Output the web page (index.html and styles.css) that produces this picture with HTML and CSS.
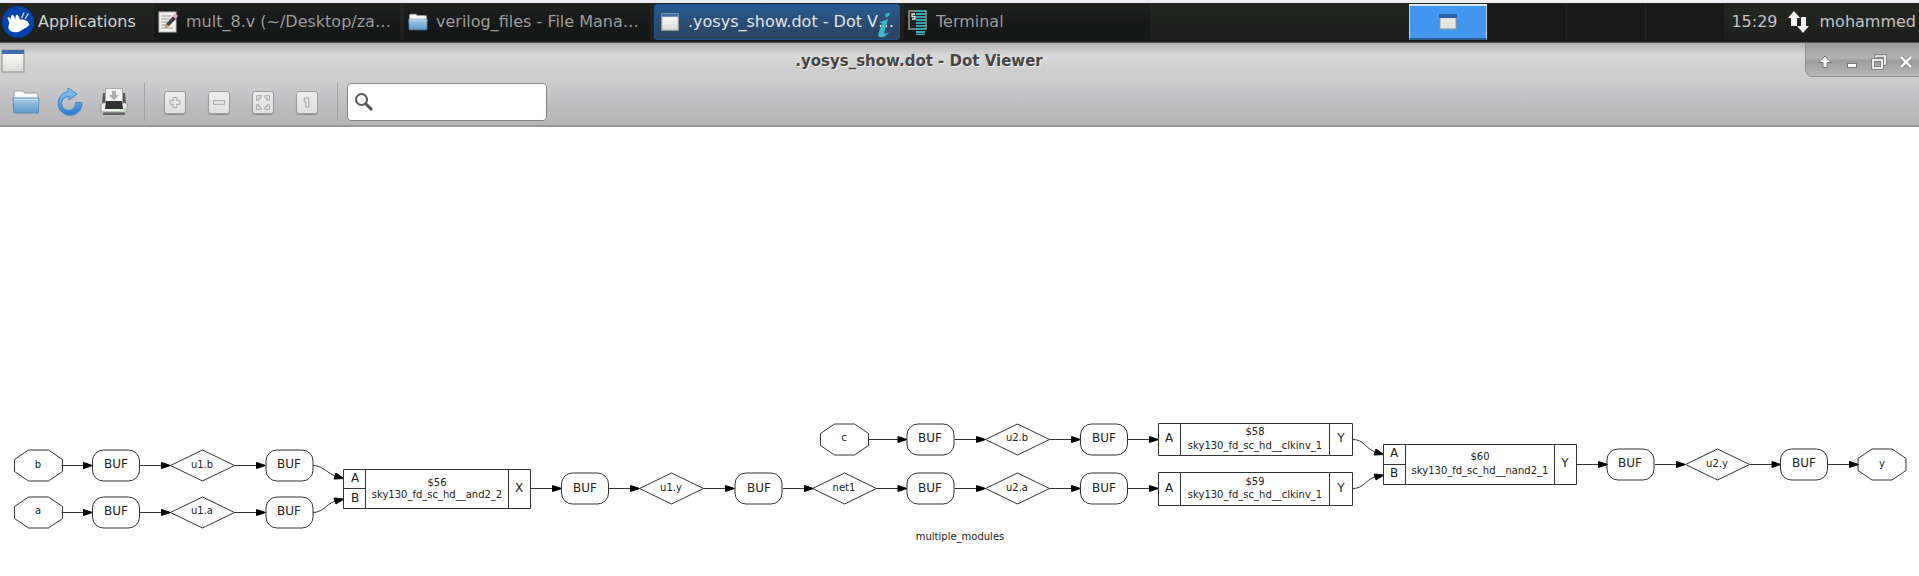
FILE: index.html
```html
<!DOCTYPE html>
<html lang="en">
<head>
<meta charset="utf-8">
<title>.yosys_show.dot - Dot Viewer</title>
<link rel="stylesheet" href="styles.css">
</head>
<body>
<svg class="defs" width="0" height="0" aria-hidden="true">
  <defs>
    <linearGradient id="blue" x1="0" y1="0" x2="0" y2="1"><stop offset="0" stop-color="#a9cbe4"/><stop offset="1" stop-color="#5a9acb"/></linearGradient>
    <linearGradient id="swirl" x1="0" y1="0" x2="0" y2="1"><stop offset="0" stop-color="#8ccbf2"/><stop offset="1" stop-color="#2878d4"/></linearGradient>
    <linearGradient id="paper" x1="0" y1="0" x2="0" y2="1"><stop offset="0" stop-color="#ffffff"/><stop offset="1" stop-color="#dcdcd6"/></linearGradient>
    <symbol id="folder" viewBox="0 0 28 26">
      <path d="M2 11V3.500Q2 2 3.500 2H11Q12.500 2 12.500 4H25Q26 4 26 5.500V11Z" fill="#fafafa" stroke="#999" stroke-width="1"/>
      <path d="M1 9H27L26.300 24H1.700Z" fill="url(#blue)" stroke="#5b8db5" stroke-width="1"/>
      <path d="M2 10.300H26" stroke="#d2e5f3"/>
    </symbol>
    <symbol id="window" viewBox="0 0 24 24">
      <rect x="1" y="1" width="22" height="22" fill="url(#paper)" stroke="#a3a39e" stroke-width="1.500"/>
      <rect x="1" y="1" width="22" height="4" fill="#3f6cad"/>
    </symbol>
    <g id="oct"><path d="M-24 -6L-10 -15.500H10L24 -6V6L10 15.500H-10L-24 6Z"/></g>
    <g id="buf"><rect x="-23.500" y="-15.500" width="47" height="31" rx="11"/></g>
    <g id="dia"><path d="M-32 0L0 -15.500L32 0L0 15.500Z"/></g>
    <g id="edge"><path d="M0 0H23"/><path class="head" d="M22 -3L31 0L22 3Z"/></g>
  </defs>
</svg>

<header class="panel">
  <button class="apps" type="button">
    <svg width="34" height="34" viewBox="0 0 34 34" aria-hidden="true">
      <circle cx="17" cy="17" r="16" fill="#0044ab"/>
      <path d="M6.500 13C7 11 9 12 10.500 15.500C9 11 11 8.500 12.500 10.500L14.500 14.500C14 10 16 8.500 17.500 11L19 14.500C23 14 27.500 16 28.500 19.500C26.500 22.500 23 23.500 19.500 26C15 28.500 8.500 27.500 7.500 23C7 20.500 9 19 8 17Z" fill="#fff"/>
      <path d="M20.500 13L23 7.500M24 14L27.500 8.500" stroke="#dce8fa" stroke-width="1.300"/>
    </svg>
    Applications
  </button>
  <nav class="tasks">
    <button class="task" type="button">
      <svg width="20" height="22" viewBox="0 0 20 22" aria-hidden="true"><rect x="1" y="1" width="17" height="20" fill="#f0f0ec" stroke="#bbb"/><path d="M3 5H13M3 8H12M3 11H10M3 14H8M3 17H15" stroke="#999"/><path d="M7 17L8 13L16 4L19 7L11 15Z" fill="#404040"/><path d="M14.500 5L17 2L20 5L17.500 8Z" fill="#e7a3d2"/><path d="M7 17L8 13L11 15Z" fill="#e0a84a"/></svg>
      <span>mult_8.v (~/Desktop/za…</span>
    </button>
    <button class="task" type="button">
      <svg width="20" height="20" aria-hidden="true"><use href="#folder"/></svg>
      <span>verilog_files - File Mana…</span>
    </button>
    <button class="task active" type="button">
      <svg width="18" height="18" aria-hidden="true"><use href="#window"/></svg>
      <span>.yosys_show.dot - Dot V…</span>
      <svg class="info" width="14" height="28" viewBox="0 0 14 32" preserveAspectRatio="none" aria-hidden="true"><path d="M9 3Q13 1 13 3.500Q12 7 9 7Q7 5 9 3Z" fill="#3fb6cb"/><path d="M2 13Q7 11 11 9L7 25Q8 27 12 24Q8 31 3 30Q0 29 2 24L5 14Z" fill="#3fb6cb"/></svg>
    </button>
    <button class="task" type="button">
      <svg width="20" height="26" viewBox="0 0 20 26" aria-hidden="true"><rect x="1" y="2" width="17" height="18" fill="#222" stroke="#9a9a9a" stroke-width="1.500"/><path d="M7 5H4V7.500H7V10H4M8 11H10" stroke="#eee" fill="none" stroke-width="1.300"/><path d="M8 2H17M8 5H17M8 8H17M8 11H17M8 14H17M8 17H17M8 20H17M8 23H17M8 25.500H17" stroke="#38a3ab" stroke-width="2"/></svg>
      <span>Terminal</span>
    </button>
  </nav>
  <div class="pager">
    <button class="desk current" type="button" aria-label="Workspace 1"><svg width="18" height="16" viewBox="0 0 18 16" aria-hidden="true"><rect x="1" y="1" width="16" height="14" fill="#e6e6e1" stroke="#9a9a92"/><path d="M0 0H18V4H0Z" fill="#2c5fa4"/></svg></button>
    <button class="desk" type="button" aria-label="Workspace 2"></button>
    <button class="desk" type="button" aria-label="Workspace 3"></button>
    <button class="desk" type="button" aria-label="Workspace 4"></button>
  </div>
  <time class="clock">15:29</time>
  <svg class="net" width="24" height="24" viewBox="0 0 24 24" aria-hidden="true"><path d="M1 8L7 1L13 8H10V16H4V8ZM10 16L16 23L22 16H19V7H14V16Z" fill="#f4f4f4"/></svg>
  <span class="user">mohammed</span>
</header>

<div class="chrome">
  <div class="titlebar">
    <svg width="24" height="24" aria-hidden="true"><use href="#window"/></svg>
    <h1>.yosys_show.dot - Dot Viewer</h1>
    <div class="controls">
      <button type="button" aria-label="Shade"><svg width="16" height="16" viewBox="0 0 16 16"><path d="M8 2L14 8.500H10V13.500H6V8.500H2Z" fill="#fff" stroke="#777"/></svg></button>
      <button type="button" aria-label="Minimize"><svg width="16" height="16" viewBox="0 0 16 16"><rect x="3.500" y="9.500" width="9" height="4" fill="#fff" stroke="#777"/></svg></button>
      <button type="button" aria-label="Restore"><svg width="16" height="16" viewBox="0 0 16 16" fill="none"><path d="M5 4V2H14V10H12" stroke="#777" stroke-width="3.500"/><path d="M5 3.500V2H14V10H12" stroke="#fff" stroke-width="1.700"/><rect x="2" y="6" width="9" height="8" stroke="#777" stroke-width="3.500"/><rect x="2" y="6" width="9" height="8" stroke="#fff" stroke-width="1.700"/></svg></button>
      <button type="button" aria-label="Close"><svg width="16" height="16" viewBox="0 0 16 16"><path d="M3 3L13 13M13 3L3 13" stroke="#777" stroke-width="4.500"/><path d="M3 3L13 13M13 3L3 13" stroke="#fff" stroke-width="2.600"/></svg></button>
    </div>
  </div>
  <div class="toolbar">
    <button class="tool" type="button" aria-label="Open"><svg width="28" height="26"><use href="#folder"/></svg></button>
    <button class="tool" type="button" aria-label="Reload"><svg width="28" height="30" viewBox="0 0 28 30"><path d="M26 15.500A12 12 0 1 1 12 4.500V1L21 7L13 13V9.500A7 7 0 1 0 19.500 15.500Z" fill="url(#swirl)" stroke="#3b87cc"/></svg></button>
    <button class="tool" type="button" aria-label="Print"><svg width="28" height="30" viewBox="0 0 28 30"><path d="M2 17L3 6H25L26 17Z" fill="#555"/><rect x="5.500" y="1.500" width="17" height="14" fill="#f2f2f2" stroke="#aaa"/><path d="M12 4H16V8H19L14 13L9 8H12Z" fill="#aaa"/><rect x="1" y="16" width="26" height="9" rx="2" fill="#f0f0f0" stroke="#999"/><path d="M6 14H22L23 22H5Z" fill="#333"/><circle cx="24.500" cy="22.500" r="1.200" fill="#7be04a"/><path d="M3 25.500H25V28H3Z" fill="#666"/></svg></button>
    <span class="sep"></span>
    <button class="tool" type="button" aria-label="Zoom in"><svg class="key" viewBox="0 0 22 23"><path d="M9 6H13V9.500H16.500V13.500H13V17H9V13.500H5.500V9.500H9Z"/></svg></button>
    <button class="tool" type="button" aria-label="Zoom out"><svg class="key" viewBox="0 0 22 23"><path d="M5 9.500H17V13.500H5Z"/></svg></button>
    <button class="tool" type="button" aria-label="Zoom to fit"><svg class="key" viewBox="0 0 22 23"><path d="M4 4H9V6.500H6.500V9H4ZM18 4H13V6.500H15.500V9H18ZM4 19H9V16.500H6.500V14H4ZM18 19H13V16.500H15.500V14H18Z"/></svg></button>
    <button class="tool" type="button" aria-label="Zoom 100%"><svg class="key" viewBox="0 0 22 23"><path d="M8 6.500H13V16.500H10V11H8Z"/></svg></button>
    <span class="sep"></span>
    <label class="search">
      <svg width="20" height="20" viewBox="0 0 20 20" aria-hidden="true"><circle cx="7.500" cy="7.500" r="5.500" fill="#f5f5f5" stroke="#555" stroke-width="2"/><path d="M11.500 11.500L18 18" stroke="#555" stroke-width="3"/></svg>
      <input type="text" aria-label="Find">
    </label>
  </div>
</div>

<main>
<svg class="graph" viewBox="0 126 1919 445" role="img" aria-label="multiple_modules netlist">
  <g class="shape">
    <use href="#oct" x="38.500" y="464.500"/><use href="#edge" x="61.500" y="464.500"/><use href="#buf" x="116" y="464.500"/><use href="#edge" x="139.500" y="464.500"/><use href="#dia" x="202.500" y="464.500"/><use href="#edge" x="234.500" y="464.500"/><use href="#buf" x="289.500" y="464.500"/>
    <use href="#oct" x="38.500" y="511.500"/><use href="#edge" x="61.500" y="511.500"/><use href="#buf" x="116" y="511.500"/><use href="#edge" x="139.500" y="511.500"/><use href="#dia" x="202.500" y="511.500"/><use href="#edge" x="234.500" y="511.500"/><use href="#buf" x="289.500" y="511.500"/>
    <path d="M313 464.500C322 464.500 326 471 335 475"/><path class="head" d="M336 472L344 477.500L334 478Z"/>
    <path d="M313 511.500C322 511.500 326 504 335 500"/><path class="head" d="M334 497L344 498L336 503Z"/>
    <path d="M343.500 468.500H530.500V507.500H343.500ZM365.500 468.500V507.500M508.500 468.500V507.500M343.500 487.500H365.500"/>
    <use href="#edge" x="530.500" y="487.500"/><use href="#buf" x="585" y="487.500"/><use href="#edge" x="608.500" y="487.500"/><use href="#dia" x="671.500" y="487.500"/><use href="#edge" x="703.500" y="487.500"/><use href="#buf" x="758.500" y="487.500"/><use href="#edge" x="782.500" y="487.500"/><use href="#dia" x="844.500" y="487.500"/><use href="#edge" x="876" y="487.500"/><use href="#buf" x="930.500" y="487.500"/><use href="#edge" x="954.500" y="487.500"/><use href="#dia" x="1017.500" y="487.500"/><use href="#edge" x="1049.500" y="487.500"/><use href="#buf" x="1104" y="487.500"/><use href="#edge" x="1127.500" y="487.500"/>
    <use href="#oct" x="844.500" y="438.500"/><path d="M868.500 438.500H880"/><use href="#edge" x="876" y="438.500"/><use href="#buf" x="930.500" y="438.500"/><use href="#edge" x="954.500" y="438.500"/><use href="#dia" x="1017.500" y="438.500"/><use href="#edge" x="1049.500" y="438.500"/><use href="#buf" x="1104" y="438.500"/><use href="#edge" x="1127.500" y="438.500"/>
    <path d="M1158.500 422.500H1352.500V454.500H1158.500ZM1180.500 422.500V454.500M1329.500 422.500V454.500"/>
    <path d="M1158.500 471.500H1352.500V504.500H1158.500ZM1180.500 471.500V504.500M1329.500 471.500V504.500"/>
    <path d="M1352.500 438.500C1364 438.500 1365 447 1375 451"/><path class="head" d="M1376 448L1384 453.500L1374 454Z"/>
    <path d="M1352.500 487.500C1364 487.500 1365 479 1375 476"/><path class="head" d="M1374 473L1384 474L1376 479Z"/>
    <path d="M1383.500 443.500H1576.500V483.500H1383.500ZM1405.500 443.500V483.500M1554.500 443.500V483.500M1383.500 463.500H1405.500"/>
    <use href="#edge" x="1576.500" y="463.500"/><use href="#buf" x="1630.500" y="463.500"/><use href="#edge" x="1654.500" y="463.500"/><use href="#dia" x="1717.500" y="463.500"/><use href="#edge" x="1750" y="463.500"/><use href="#buf" x="1804" y="463.500"/><use href="#edge" x="1827.500" y="463.500"/><use href="#oct" x="1882" y="463.500"/>
  </g>
  <g class="cell">
    <text x="116" y="467">BUF</text><text x="289" y="467">BUF</text><text x="116" y="514">BUF</text><text x="289" y="514">BUF</text>
    <text x="355" y="481">A</text><text x="355" y="501">B</text><text x="519" y="491">X</text>
    <text x="585" y="491">BUF</text><text x="759" y="491">BUF</text><text x="930" y="491">BUF</text><text x="1104" y="491">BUF</text>
    <text x="930" y="441">BUF</text><text x="1104" y="441">BUF</text>
    <text x="1169" y="441">A</text><text x="1341" y="441">Y</text><text x="1169" y="491">A</text><text x="1341" y="491">Y</text>
    <text x="1394" y="456">A</text><text x="1394" y="476">B</text><text x="1565" y="466">Y</text>
    <text x="1630" y="466">BUF</text><text x="1804" y="466">BUF</text>
  </g>
  <g class="name">
    <text x="38" y="467">b</text><text x="202" y="467">u1.b</text><text x="38" y="513">a</text><text x="202" y="513">u1.a</text>
    <text x="437" y="485">$56</text><text x="437" y="497">sky130_fd_sc_hd__and2_2</text>
    <text x="671" y="490">u1.y</text><text x="844" y="490">net1</text><text x="1017" y="490">u2.a</text>
    <text x="844" y="440">c</text><text x="1017" y="440">u2.b</text>
    <text x="1255" y="434">$58</text><text x="1255" y="448">sky130_fd_sc_hd__clkinv_1</text>
    <text x="1255" y="484">$59</text><text x="1255" y="497">sky130_fd_sc_hd__clkinv_1</text>
    <text x="1480" y="459">$60</text><text x="1480" y="473">sky130_fd_sc_hd__nand2_1</text>
    <text x="1717" y="466">u2.y</text><text x="1882" y="466">y</text>
    <text x="960" y="539">multiple_modules</text>
  </g>
</svg>
</main>
</body>
</html>
```
FILE: styles.css
```css
* { box-sizing: border-box; }
body { margin: 0; background: #fff; font-family: "DejaVu Sans", sans-serif; }
button { border: 0; padding: 0; margin: 0; background: none; font: inherit; color: inherit; }
svg { flex: none; }
.defs { position: absolute; }

.panel {
  display: flex;
  align-items: center;
  height: 43px;
  padding: 0 3px 2px 0;
  border-top: 3px solid #eeeef2;
  border-bottom: 1px solid #555;
  background: linear-gradient(#242622, #202220 60%, #1c1d1c);
  color: #c4c4c4;
  font-size: 16px;
  white-space: nowrap;
}
.apps { display: flex; align-items: center; gap: 3px; width: 154px; padding-left: 1px; color: #d2d2d2; }
.tasks { display: flex; gap: 4px; }
.task {
  position: relative;
  display: flex;
  align-items: center;
  gap: 8px;
  width: 246px;
  height: 36px;
  padding: 0 4px;
  background: linear-gradient(#1f211f, #161717 60%);
  color: #9c9c9c;
}
.task.active {
  gap: 9px;
  padding: 0 6px;
  border: 1px solid #1f4f8a;
  border-radius: 3px;
  background: linear-gradient(#275b95, #2a4a70 60%, #2b4361);
  color: #e4e4e4;
}
.info { position: absolute; right: 8px; top: 6px; }
.pager { display: flex; gap: 1px; margin-left: auto; background: #242424; }
.desk { width: 78px; height: 36px; background: #191919; }
.desk.current {
  display: flex;
  align-items: center;
  justify-content: center;
  border: 1px solid #c6cbd4;
  border-top: 2px solid #dfe3ea;
  border-bottom: 2px solid #2d5c8e;
  background: #4497f0;
}
.clock { margin-left: 7px; }
.net { margin: 0 9px; }

.chrome {
  border-bottom: 2px solid #989698;
  background: linear-gradient(#b4b4b4, #dadada 16%, #cfcfcf 28%, #cdcdcd 45%, #c5c3c6 65%, #bdbcbd 80%, #b7b5b7);
}
.titlebar { display: flex; align-items: center; height: 36px; padding-left: 1px; }
h1 {
  flex: 1;
  margin: 0;
  padding-left: 8px;
  font-size: 15px;
  text-align: center;
  color: #464646;
  text-shadow: 1px 1px 0 #eee;
}
.controls {
  display: flex;
  align-self: flex-start;
  align-items: center;
  gap: 11px;
  height: 34px;
  padding: 4px 5px 0 11px;
  border: 1px solid #8f8f8f;
  border-width: 0 0 1px 1px;
  border-radius: 0 0 0 8px;
  background: linear-gradient(#9b9b9b, #b4b4b4 45%, #9d9d9d 55%, #b8b8b8);
}
.controls svg, .tool svg { display: block; }
.toolbar { display: flex; align-items: center; height: 46px; padding: 0 12px; }
.tool { margin-right: 16px; }
.sep { width: 1px; height: 38px; margin-right: 16px; background: #a3a1a3; }
.key {
  width: 22px;
  height: 23px;
  margin: 0 3px;
  border: 1px solid #9c9c9c;
  border-radius: 3px;
  background: linear-gradient(#ececec, #e0e0e0);
  box-shadow: 0 1px 1px #8d8d8d;
  fill: #e8e8e8;
  stroke: #a0a0a0;
}
.sep + .search { margin-left: -7px; }
.search {
  display: flex;
  align-items: center;
  width: 200px;
  height: 38px;
  padding: 0 6px;
  border: 1px solid #858585;
  border-radius: 4px;
  background: #fff;
}
.search input { flex: 1; min-width: 0; border: 0; outline: 0; background: none; font: inherit; }

.graph { display: block; width: 100%; }
.shape { fill: none; stroke: #333; stroke-width: 1; }
.head { fill: #000; stroke: #000; }
.cell, .name { fill: #222; text-anchor: middle; }
.cell { font-size: 12px; }
.name { font-size: 10px; }
```
